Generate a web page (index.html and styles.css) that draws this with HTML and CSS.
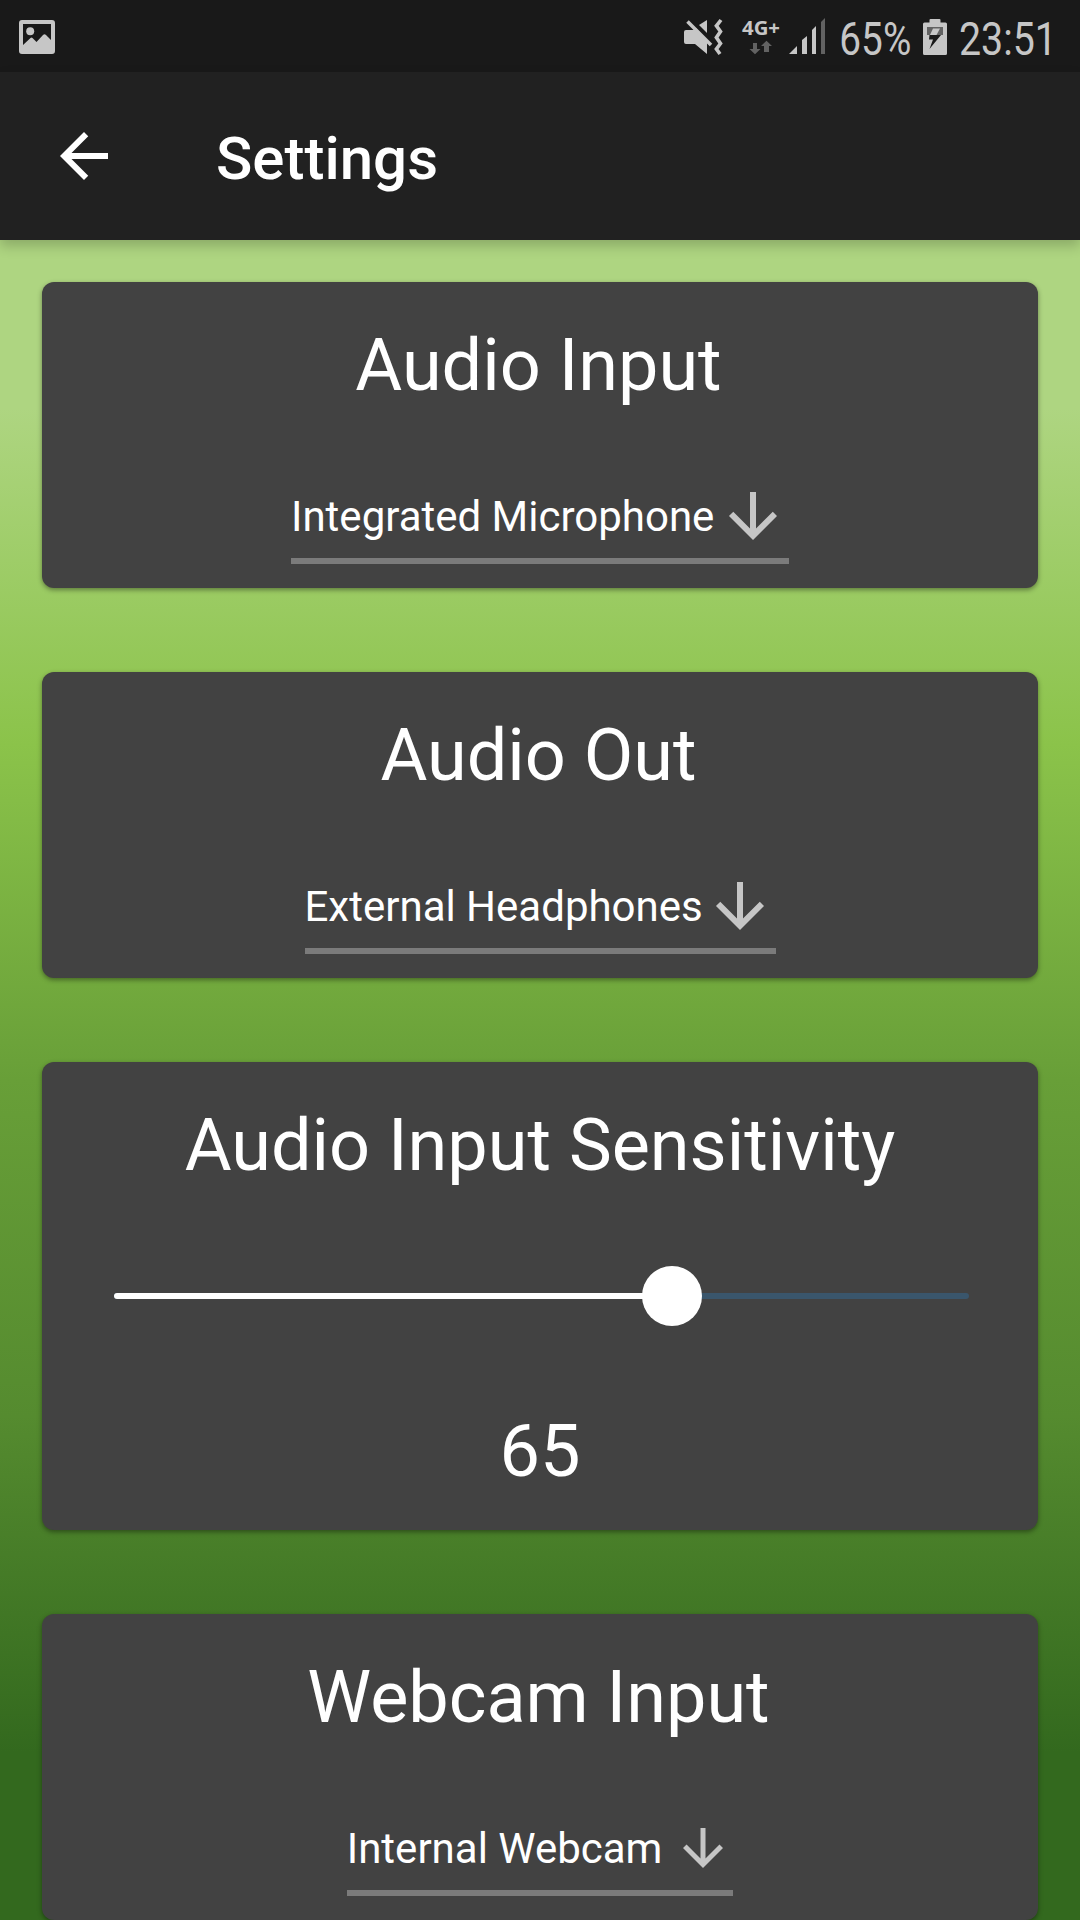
FILE: index.html
```html
<!DOCTYPE html>
<html lang="en">
<head>
<meta charset="utf-8">
<title>Settings</title>
<link rel="stylesheet" href="styles.css">
</head>
<body>
<div class="status-bar">
  <svg class="status-photo" width="36" height="34" viewBox="0 0 36 34">
    <path fill="#c6c6c6" fill-rule="evenodd" d="M3 0h30a3 3 0 0 1 3 3v28a3 3 0 0 1-3 3H3a3 3 0 0 1-3-3V3a3 3 0 0 1 3-3zM4 4v21l7.500-7q1-.8 2 0l4 4 6.500-7q1.500-1.500 3 0l5 5V4z"/>
    <circle cx="11.200" cy="11.300" r="4" fill="#c6c6c6"/>
  </svg>
  <svg class="status-icons" width="396" height="72" viewBox="0 0 396 72">
    <g fill="#c6c6c6">
      <path d="M0 32q0-2 2-2h7l3-2 11 12v14L11 44H2q-2 0-2-2z"/>
      <path d="M23 20v13l-8-8z"/>
      <path d="M3.500 21.500L27 45" stroke="#c6c6c6" stroke-width="3.600"/>
      <path d="M37 20l-4.600 5.800 4.100 5.700-4.100 6 4.100 6-4.100 5.500 3.600 5" fill="none" stroke="#c6c6c6" stroke-width="3.600"/>
      <text class="network" x="58" y="35" textLength="38" lengthAdjust="spacingAndGlyphs">4G+</text>
      <path d="M105 54h8v-8zM118 54h5V36l-5 4zM128 54h4V26l-4 4z"/>
      <text class="status-text" x="155.300" y="54.500" textLength="72" lengthAdjust="spacingAndGlyphs">65%</text>
      <path d="M239 24q0-1.500 1.500-1.500h5V20q0-1 1-1h9q1 0 1 1v2.500h5q1.500 0 1.500 1.500v29.500q0 1.500-1.500 1.500h-21q-1.500 0-1.500-1.500z"/>
      <text class="status-text" x="275" y="54.500" textLength="98" lengthAdjust="spacingAndGlyphs">23:51</text>
    </g>
    <path fill="#626262" d="M69 43h4v6h3.500L71 54.300 65.500 49H69zM80 52h5v-6h3l-5.500-5.300L77 46h3zM137 54h4V18l-4 4z"/>
    <path fill="#626262" d="M243 27h16v8h-16z"/>
    <path fill="#c6c6c6" d="M249 28.500h7l-3.500 6.500h-6.500z"/>
    <path fill="#191919" d="M245.500 35H257L245.500 49l3.500-9.500h-4z"/>
  </svg>
</div>
<header class="app-bar">
  <svg class="icon" width="72" height="72" viewBox="0 0 24 24"><path fill="#fff" d="M20 11H7.830l5.590-5.590L12 4l-8 8 8 8 1.410-1.410L7.830 13H20v-2z"/></svg>
  <h1 class="app-title">Settings</h1>
</header>
<main class="content">
  <section class="card">
    <h2 class="card-title">Audio Input</h2>
    <div class="dropdown dropdown-mic">
      <span class="dropdown-label">Integrated Microphone</span>
      <svg class="icon" width="72" height="72" viewBox="0 0 24 24"><path fill="#c6c6c6" d="M20 12l-1.410-1.410L13 16.170V4h-2v12.170l-5.580-5.590L4 12l8 8 8-8z"/></svg>
    </div>
  </section>
  <section class="card">
    <h2 class="card-title">Audio Out</h2>
    <div class="dropdown dropdown-headphones">
      <span class="dropdown-label">External Headphones</span>
      <svg class="icon" width="72" height="72" viewBox="0 0 24 24"><path fill="#c6c6c6" d="M20 12l-1.410-1.410L13 16.170V4h-2v12.170l-5.580-5.590L4 12l8 8 8-8z"/></svg>
    </div>
  </section>
  <section class="card card-slider">
    <h2 class="card-title card-title-wide">Audio Input Sensitivity</h2>
    <div class="slider">
      <div class="slider-fill"></div>
      <div class="slider-thumb"></div>
    </div>
    <div class="slider-value">65</div>
  </section>
  <section class="card">
    <h2 class="card-title">Webcam Input</h2>
    <div class="dropdown dropdown-webcam">
      <span class="dropdown-label">Internal Webcam</span>
      <svg class="icon" width="60" height="60" viewBox="0 0 24 24"><path fill="#c6c6c6" d="M20 12l-1.410-1.410L13 16.170V4h-2v12.170l-5.580-5.590L4 12l8 8 8-8z"/></svg>
    </div>
  </section>
</main>
</body>
</html>
```
FILE: styles.css
```css
* {
  box-sizing: border-box;
}

body {
  margin: 0;
  width: 1080px;
  height: 1920px;
  overflow: hidden;
  display: flex;
  flex-direction: column;
  font-family: Roboto, "Noto Sans", sans-serif;
  color: #fff;
  background: #212121;
}

svg {
  display: block;
  flex: none;
}

.status-bar {
  height: 72px;
  flex: none;
  display: flex;
  justify-content: space-between;
  align-items: flex-start;
  padding-left: 19px;
  background: #191919;
}

.status-photo {
  margin-top: 20px;
}

.status-icons {
  overflow: visible;
}

.status-text {
  font-size: 46px;
}

.network {
  font-family: "Open Sans", "Noto Sans", sans-serif;
  font-size: 20px;
  font-weight: 700;
}

.app-bar {
  height: 168px;
  flex: none;
  display: flex;
  align-items: center;
  gap: 96px;
  padding-left: 48px;
  background: #212121;
  box-shadow: 0 6px 12px rgba(0, 0, 0, 0.2);
  z-index: 1;
}

.app-title {
  margin: 6px 0 0;
  font-size: 60px;
  line-height: 70px;
  font-weight: 500;
}

.content {
  height: 1680px;
  flex: none;
  display: flex;
  flex-direction: column;
  gap: 84px;
  padding: 42px 42px 0;
  background: linear-gradient(#aed581 10%, #8bc34a 30%, #689f38 50%, #558b2f 70%, #33691e 90%);
}

.card {
  height: 306px;
  flex: none;
  display: flex;
  flex-direction: column;
  align-items: center;
  padding-top: 42px;
  border-radius: 12px;
  background: #424242;
  box-shadow: 0 2px 5px rgba(0, 0, 0, 0.4);
}

.card-slider {
  height: 468px;
}

.card-title,
.slider-value {
  margin: 0;
  font-size: 72px;
  line-height: 84px;
  font-weight: 400;
}

.card-title {
  padding-right: 3px;
}

.card-title-wide {
  padding-right: 0;
}

.dropdown {
  height: 90px;
  margin-top: 66px;
  display: flex;
  align-items: center;
  justify-content: space-between;
  border-bottom: 6px solid #7b7b7b;
  font-size: 42px;
  line-height: 48px;
  white-space: nowrap;
}

.dropdown-label {
  padding-top: 2px;
}

.dropdown-mic {
  width: 498px;
}

.dropdown-headphones {
  width: 471px;
}

.dropdown-webcam {
  width: 386.5px;
}

.slider {
  width: 855px;
  height: 6px;
  margin: 105px 0 111px 3px;
  display: flex;
  align-items: center;
  border-radius: 3px;
  background: #3a566c;
}

.slider-fill {
  width: 65%;
  height: 6px;
  border-radius: 3px;
  background: #fff;
}

.slider-thumb {
  width: 60px;
  height: 60px;
  flex: none;
  margin-left: -27.5px;
  border-radius: 50%;
  background: #fff;
}
```
